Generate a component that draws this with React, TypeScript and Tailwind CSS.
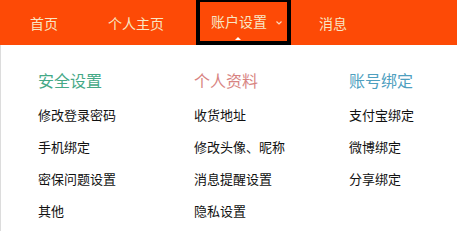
import React from "react";

const font = { fontFamily: '"Noto Sans CJK SC", "Noto Sans", sans-serif' };

const columns = [
  { title: "安全设置", color: "text-[#45a987]", items: ["修改登录密码", "手机绑定", "密保问题设置", "其他"] },
  { title: "个人资料", color: "text-[#d88482]", items: ["收货地址", "修改头像、昵称", "消息提醒设置", "隐私设置"] },
  { title: "账号绑定", color: "text-[#4f9fbf]", items: ["支付宝绑定", "微博绑定", "分享绑定"] },
];

export default function App() {
  return (
    <div className="w-[457px] h-[231px] bg-white overflow-hidden" style={font}>
      <div className="h-[45px] bg-[#fd4a06] flex items-stretch text-[14px] text-[#f8e6c4]">
        <div className="ml-[30px] flex items-center pt-[2px]">首页</div>
        <div className="ml-[50px] flex items-center pt-[2px]">个人主页</div>
        <div className="ml-[32px] relative w-[95px] border-4 border-t-2 border-black flex items-center pl-[11px]">
          <span>账户设置</span>
          <svg className="ml-[9px] mt-[3px]" width="6" height="4" viewBox="0 0 6 4">
            <path d="M0.5 0.5 L3 3 L5.5 0.5" stroke="#f8d9c0" strokeWidth="1.2" fill="none" />
          </svg>
          <div className="absolute left-[35px] bottom-[1px] w-0 h-0 border-l-[3px] border-r-[3px] border-b-[3px] border-l-transparent border-r-transparent border-b-white" />
        </div>
        <div className="ml-[28px] flex items-center pt-[2px]">消息</div>
      </div>
      <div className="h-[186px] border-l border-[#dcdcdc] grid grid-cols-[156px_155px_auto] pl-[37px] pt-[23px]">
        {columns.map((c) => (
          <div key={c.title} className="flex flex-col">
            <div className={`text-[16px] leading-[24px] ${c.color}`}>{c.title}</div>
            <div className="mt-[7px] flex flex-col">
              {c.items.map((it) => (
                <div key={it} className="text-[13px] h-[32px] leading-[32px] text-[#111]">
                  {it}
                </div>
              ))}
            </div>
          </div>
        ))}
      </div>
    </div>
  );
}
